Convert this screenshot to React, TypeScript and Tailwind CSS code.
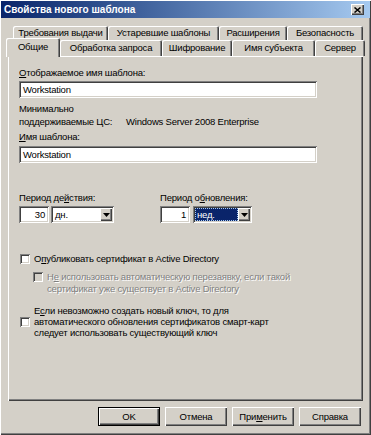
import React from 'react';

const raised =
  'shadow-[inset_1px_1px_0_#ffffff,inset_-1px_-1px_0_#404040,inset_-2px_-2px_0_#808080]';
const sunken =
  'shadow-[inset_1px_1px_0_#808080,inset_-1px_-1px_0_#ffffff,inset_2px_2px_0_#404040,inset_-2px_-2px_0_#d4d0c8]';

const Arrow: React.FC = () => (
  <div className={`w-[12px] h-full bg-[#d4d0c8] flex items-center justify-center ${raised}`}>
    <svg width="7" height="4" viewBox="0 0 7 4">
      <path d="M0 0h7L3.5 4z" fill="#000" />
    </svg>
  </div>
);

const Checkbox: React.FC<{ disabled?: boolean }> = ({ disabled }) => (
  <div className={`w-[10px] h-[10px] shrink-0 ${disabled ? 'bg-[#d4d0c8]' : 'bg-white'} ${sunken}`} />
);

const Button: React.FC<{ children: React.ReactNode; primary?: boolean }> = ({ children, primary }) => (
  <div
    className={`w-[62px] h-[19px] flex items-center justify-center bg-[#d4d0c8] ${
      primary
        ? 'shadow-[inset_0_0_0_1px_#000000,inset_2px_2px_0_#ffffff,inset_-2px_-2px_0_#404040,inset_-3px_-3px_0_#808080]'
        : raised
    }`}
  >
    {children}
  </div>
);

const backTabs = [
  { label: 'Требования выдачи', w: 'w-[95px]' },
  { label: 'Устаревшие шаблоны', w: 'w-[111px]' },
  { label: 'Расширения', w: 'w-[68px]' },
  { label: 'Безопасность', w: 'w-[76px]' },
];

const frontTabs = [
  { label: 'Обработка запроса', w: 'w-[102px]' },
  { label: 'Шифрование', w: 'w-[70px]' },
  { label: 'Имя субъекта', w: 'w-[83px]' },
  { label: 'Сервер', w: 'w-[50px]' },
];

const tabShape =
  'flex items-center justify-center rounded-t-[2px] bg-[#d4d0c8] shadow-[inset_1px_1px_0_#ffffff,inset_-1px_0_0_#404040,inset_-2px_0_0_#808080]';

export default function App() {
  return (
    <div
      className="w-[371px] h-[435px] bg-[#d4d0c8] text-black text-[9.5px] tracking-[-0.2px] leading-[12px] flex flex-col shadow-[inset_1px_1px_0_#ffffff,inset_-1px_-1px_0_#404040,inset_-2px_-2px_0_#808080] overflow-hidden"
      style={{ fontFamily: '"Liberation Sans", Arial, sans-serif' }}
    >
      {/* Title bar */}
      <div className="mx-[1px] mt-[1px] h-[17px] flex items-center justify-between pl-[3px] pr-[6px] bg-linear-to-r from-[#0a246a] to-[#a6caf0]">
        <span className="text-white font-bold text-[10px] tracking-normal">Свойства нового шаблона</span>
        <div className={`w-[13px] h-[11px] bg-[#d4d0c8] flex items-center justify-center ${raised}`}>
          <svg width="7" height="6" viewBox="0 0 7 6">
            <path d="M0.5 0.5l6 5M6.5 0.5l-6 5" stroke="#000" strokeWidth="1.5" />
          </svg>
        </div>
      </div>

      {/* Back tab row */}
      <div className="mt-[8px] ml-[13px] h-[14px] flex">
        {backTabs.map((t) => (
          <div key={t.label} className={`${t.w} ${tabShape}`}>
            {t.label}
          </div>
        ))}
      </div>

      {/* Front tab row */}
      <div className="relative z-10 ml-[6px] h-[16px] flex items-end">
        <div className={`relative top-[1px] w-[54px] h-[19px] pb-[2px] ${tabShape}`}>Общие</div>
        {frontTabs.map((t) => (
          <div key={t.label} className={`${t.w} h-[16px] ${tabShape}`}>
            {t.label}
          </div>
        ))}
      </div>

      {/* Panel */}
      <div className={`ml-[8px] w-[355px] h-[345px] flex flex-col pl-[11px] pt-[11px] ${raised}`}>
        <div>
          <span className="underline">О</span>тображаемое имя шаблона:
        </div>
        <div className={`mt-[2px] w-[298px] h-[17px] bg-white flex items-center pl-[4px] ${sunken}`}>Workstation</div>

        <div className="mt-[4px] leading-[13px]">
          <div>Минимально</div>
          <div className="flex">
            <span className="w-[107px]">поддерживаемые ЦС:</span>
            <span>Windows Server 2008 Enterprise</span>
          </div>
        </div>

        <div className="mt-[3px]">
          <span className="underline">И</span>мя шаблона:
        </div>
        <div className={`mt-[3px] w-[298px] h-[17px] bg-white flex items-center pl-[4px] ${sunken}`}>Workstation</div>

        <div className="mt-[29px] flex">
          <div className="w-[141px] flex flex-col">
            <div>
              Период де<span className="underline">й</span>ствия:
            </div>
            <div className="mt-[2px] flex gap-[2px]">
              <div className={`w-[30px] h-[17px] bg-white flex items-center justify-end pr-[4px] ${sunken}`}>30</div>
              <div className={`w-[63px] h-[17px] bg-white flex items-center p-[2px] ${sunken}`}>
                <span className="flex-1 pl-[2px]">дн.</span>
                <Arrow />
              </div>
            </div>
          </div>
          <div className="flex flex-col">
            <div>
              Период о<span className="underline">б</span>новления:
            </div>
            <div className="mt-[2px] flex gap-[3px]">
              <div className={`w-[30px] h-[17px] bg-white flex items-center justify-end pr-[4px] ${sunken}`}>1</div>
              <div className={`w-[59px] h-[17px] bg-white flex items-center p-[2px] ${sunken}`}>
                <span className="flex-1 h-full flex items-center pl-[2px] bg-[#0a246a] text-white outline-1 outline-dotted outline-[#a6caf0] -outline-offset-1">
                  нед.
                </span>
                <Arrow />
              </div>
            </div>
          </div>
        </div>

        <div className="mt-[30px] flex items-center gap-[4px] pl-[1px]">
          <Checkbox />
          <span>
            О<span className="underline">п</span>убликовать сертификат в Active Directory
          </span>
        </div>

        <div className="mt-[6px] ml-[14px] flex gap-[4px] text-[#808080] [text-shadow:1px_1px_0_#ffffff]">
          <div className="pt-[1px]">
            <Checkbox disabled />
          </div>
          <div className="leading-[12px]">
            <div>
              Н<span className="underline">е</span> использовать автоматическую перезаявку, если такой
            </div>
            <div>сертификат уже существует в Active Directory</div>
          </div>
        </div>

        <div className="mt-[10px] flex items-center gap-[4px] pl-[1px]">
          <Checkbox />
          <div className="leading-[11px]">
            <div>
              Е<span className="underline">с</span>ли невозможно создать новый ключ, то для
            </div>
            <div>автоматического обновления сертификатов смарт-карт</div>
            <div>следует использовать существующий ключ</div>
          </div>
        </div>
      </div>

      {/* Buttons */}
      <div className="mt-[6px] ml-[98px] flex gap-[5px]">
        <Button primary>OK</Button>
        <Button>Отмена</Button>
        <Button>
          <span>
            При<span className="underline">м</span>енить
          </span>
        </Button>
        <Button>Справка</Button>
      </div>
    </div>
  );
}
